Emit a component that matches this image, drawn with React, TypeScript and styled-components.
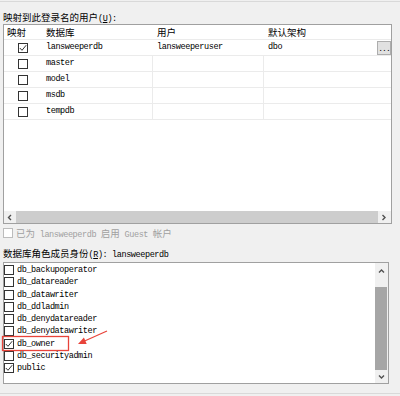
import React from 'react';
import styled, { createGlobalStyle } from 'styled-components';

const GlobalStyle = createGlobalStyle`
  html, body {
    margin: 0;
    padding: 0;
    background: #f0f0f0;
  }
  body {
    font-family: "Noto Sans CJK SC", "Noto Sans", sans-serif;
    font-size: 9.5px;
    color: #000;
  }
  * {
    box-sizing: border-box;
  }
`;

const Page = styled.div`
  position: relative;
  width: 400px;
  height: 396px;
  overflow: hidden;
  background: #f0f0f0;
  display: flex;
  flex-direction: column;
`;

const Edge = styled.div<{ $top?: number }>`
  height: 1px;
  margin-top: ${p => p.$top ?? 0}px;
  background: #d9d9d9;
  flex-shrink: 0;
`;

const Body = styled.div`
  padding-left: 3px;
  display: flex;
  flex-direction: column;
`;

const Caption = styled.div<{ $top: number }>`
  margin-top: ${p => p.$top}px;
  height: 13px;
  line-height: 13px;
  white-space: pre;
`;

const Mono = styled.span`
  font-family: "Liberation Mono", monospace;
  font-size: 8.5px;
  letter-spacing: -0.4px;
  white-space: pre;
`;

const Key = styled.span`
  text-decoration: underline;
`;

const GridBox = styled.div`
  width: 389px;
  height: 200px;
  border: 1px solid #a0a0a0;
  background: #fff;
  display: flex;
  flex-direction: column;
`;

const GridRow = styled.div<{ $header?: boolean }>`
  display: grid;
  grid-template-columns: 38px 111px 111px 1fr;
  height: ${p => (p.$header ? 15 : 16)}px;
  border-bottom: 1px solid #ebebeb;
  line-height: ${p => (p.$header ? 14 : 15)}px;
`;

const Cell = styled.div<{ $pad?: number; $line?: boolean; $center?: boolean }>`
  padding-left: ${p => p.$pad ?? 4}px;
  border-right: ${p => (p.$line ? '1px solid #ebebeb' : 'none')};
  display: flex;
  align-items: center;
  justify-content: ${p => (p.$center ? 'center' : 'space-between')};
  white-space: nowrap;
  overflow: hidden;
`;

const DotsButton = styled.div`
  width: 14px;
  height: 14px;
  background: #e1e1e1;
  border: 1px solid #adadad;
  font-family: "Liberation Mono", monospace;
  font-size: 8px;
  letter-spacing: -1px;
  line-height: 14px;
  text-align: center;
`;

const Spacer = styled.div`
  flex: 1;
`;

const HScroll = styled.div`
  height: 12px;
  display: flex;
  background: #f0f0f0;
`;

const ScrollBtn = styled.div<{ $size: number }>`
  width: ${p => p.$size}px;
  height: 12px;
  flex-shrink: 0;
  display: flex;
  align-items: center;
  justify-content: center;
`;

const HThumb = styled.div`
  flex: 1;
  background: #cdcdcd;
`;

const Box = styled.span<{ $disabled?: boolean }>`
  width: 10px;
  height: 10px;
  flex-shrink: 0;
  border: 1px solid ${p => (p.$disabled ? '#bcbcbc' : '#333')};
  background: #fff;
  display: flex;
  align-items: center;
  justify-content: center;
`;

const GuestRow = styled.div`
  margin-top: 2px;
  height: 13px;
  display: flex;
  align-items: center;
  gap: 3px;
  color: #a0a0a0;
  white-space: pre;
`;

const ListBox = styled.div`
  margin-top: 2px;
  width: 386px;
  height: 122px;
  border: 1px solid #a0a0a0;
  background: #fff;
  display: flex;
`;

const Items = styled.div`
  flex: 1;
  padding-top: 1px;
  display: flex;
  flex-direction: column;
`;

const Item = styled.div`
  height: 12.25px;
  display: flex;
  align-items: center;
  gap: 3px;
  white-space: nowrap;
`;

const VScroll = styled.div`
  width: 13px;
  padding-right: 1px;
  background: #f0f0f0;
  display: flex;
  flex-direction: column;
`;

const VTrack = styled.div`
  flex: 1;
  padding-top: 8px;
  display: flex;
  flex-direction: column;
`;

const VThumb = styled.div`
  flex: 1;
  background: #a6a6a6;
`;

const VBtn = styled.div<{ $h: number }>`
  height: ${p => p.$h}px;
  display: flex;
  align-items: center;
  justify-content: center;
`;

const Overlay = styled.svg`
  position: absolute;
  left: 0;
  top: 0;
  pointer-events: none;
`;

const Check = ({ on, disabled }: { on?: boolean; disabled?: boolean }) => (
  <Box $disabled={disabled}>
    {on && (
      <svg width="8" height="8" viewBox="0 0 8 8">
        <polyline points="0.8,4 3,6.3 7.2,1.2" fill="none" stroke="#333" strokeWidth="1" />
      </svg>
    )}
  </Box>
);

const Chevron = ({ dir }: { dir: 'left' | 'right' | 'up' | 'down' }) => {
  const pts = {
    left: '4,1 1.5,3.5 4,6',
    right: '1.5,1 4,3.5 1.5,6',
    up: '1,4.5 3.5,2 6,4.5',
    down: '1,2.5 3.5,5 6,2.5',
  }[dir];
  return (
    <svg width="7" height="7" viewBox="0 0 7 7">
      <polyline points={pts} fill="none" stroke="#505050" strokeWidth="1.4" />
    </svg>
  );
};

const users = [
  { on: true, db: 'lansweeperdb', user: 'lansweeperuser', schema: 'dbo' },
  { on: false, db: 'master', user: '', schema: '' },
  { on: false, db: 'model', user: '', schema: '' },
  { on: false, db: 'msdb', user: '', schema: '' },
  { on: false, db: 'tempdb', user: '', schema: '' },
];

const roles = [
  { name: 'db_backupoperator', on: false },
  { name: 'db_datareader', on: false },
  { name: 'db_datawriter', on: false },
  { name: 'db_ddladmin', on: false },
  { name: 'db_denydatareader', on: false },
  { name: 'db_denydatawriter', on: false },
  { name: 'db_owner', on: true },
  { name: 'db_securityadmin', on: false },
  { name: 'public', on: true },
];

export default function App() {
  return (
    <Page>
      <GlobalStyle />
      <Edge $top={1} />
      <Body>
        <Caption $top={9}>
          映射到此登录名的用户<Mono>(<Key>U</Key>):</Mono>
        </Caption>
        <GridBox>
          <GridRow $header>
            <Cell $pad={3}>映射</Cell>
            <Cell>数据库</Cell>
            <Cell>用户</Cell>
            <Cell>默认架构</Cell>
          </GridRow>
          {users.map((u, i) => (
            <GridRow key={u.db}>
              <Cell $pad={0} $center>
                <Check on={u.on} />
              </Cell>
              <Cell $line={i > 0}>
                <Mono>{u.db}</Mono>
              </Cell>
              <Cell $line={i > 0}>
                <Mono>{u.user}</Mono>
              </Cell>
              <Cell>
                <Mono>{u.schema}</Mono>
                {i === 0 && <DotsButton>...</DotsButton>}
              </Cell>
            </GridRow>
          ))}
          <Spacer />
          <HScroll>
            <ScrollBtn $size={12}>
              <Chevron dir="left" />
            </ScrollBtn>
            <HThumb />
            <ScrollBtn $size={13}>
              <Chevron dir="right" />
            </ScrollBtn>
          </HScroll>
        </GridBox>

        <GuestRow>
          <Check disabled />
          <span>
            已为<Mono> lansweeperdb </Mono>启用<Mono> Guest </Mono>帐户
          </span>
        </GuestRow>

        <Caption $top={8}>
          数据库角色成员身份<Mono>(<Key>R</Key>): lansweeperdb</Mono>
        </Caption>

        <ListBox>
          <Items>
            {roles.map(r => (
              <Item key={r.name}>
                <Check on={r.on} />
                <Mono>{r.name}</Mono>
              </Item>
            ))}
          </Items>
          <VScroll>
            <VBtn $h={16}>
              <Chevron dir="up" />
            </VBtn>
            <VTrack>
              <VThumb />
            </VTrack>
            <VBtn $h={13}>
              <Chevron dir="down" />
            </VBtn>
          </VScroll>
        </ListBox>
      </Body>
      <Edge $top={9} />

      <Overlay width="400" height="396" viewBox="0 0 400 396">
        <rect x="2.5" y="336.5" width="66" height="14" fill="none" stroke="#e8433a" strokeWidth="1.3" />
        <line x1="107" y1="331" x2="84" y2="341.3" stroke="#e8433a" strokeWidth="1.2" />
        <polygon points="78,344 86.7,343.9 83.9,337.5" fill="#e8433a" />
      </Overlay>
    </Page>
  );
}
